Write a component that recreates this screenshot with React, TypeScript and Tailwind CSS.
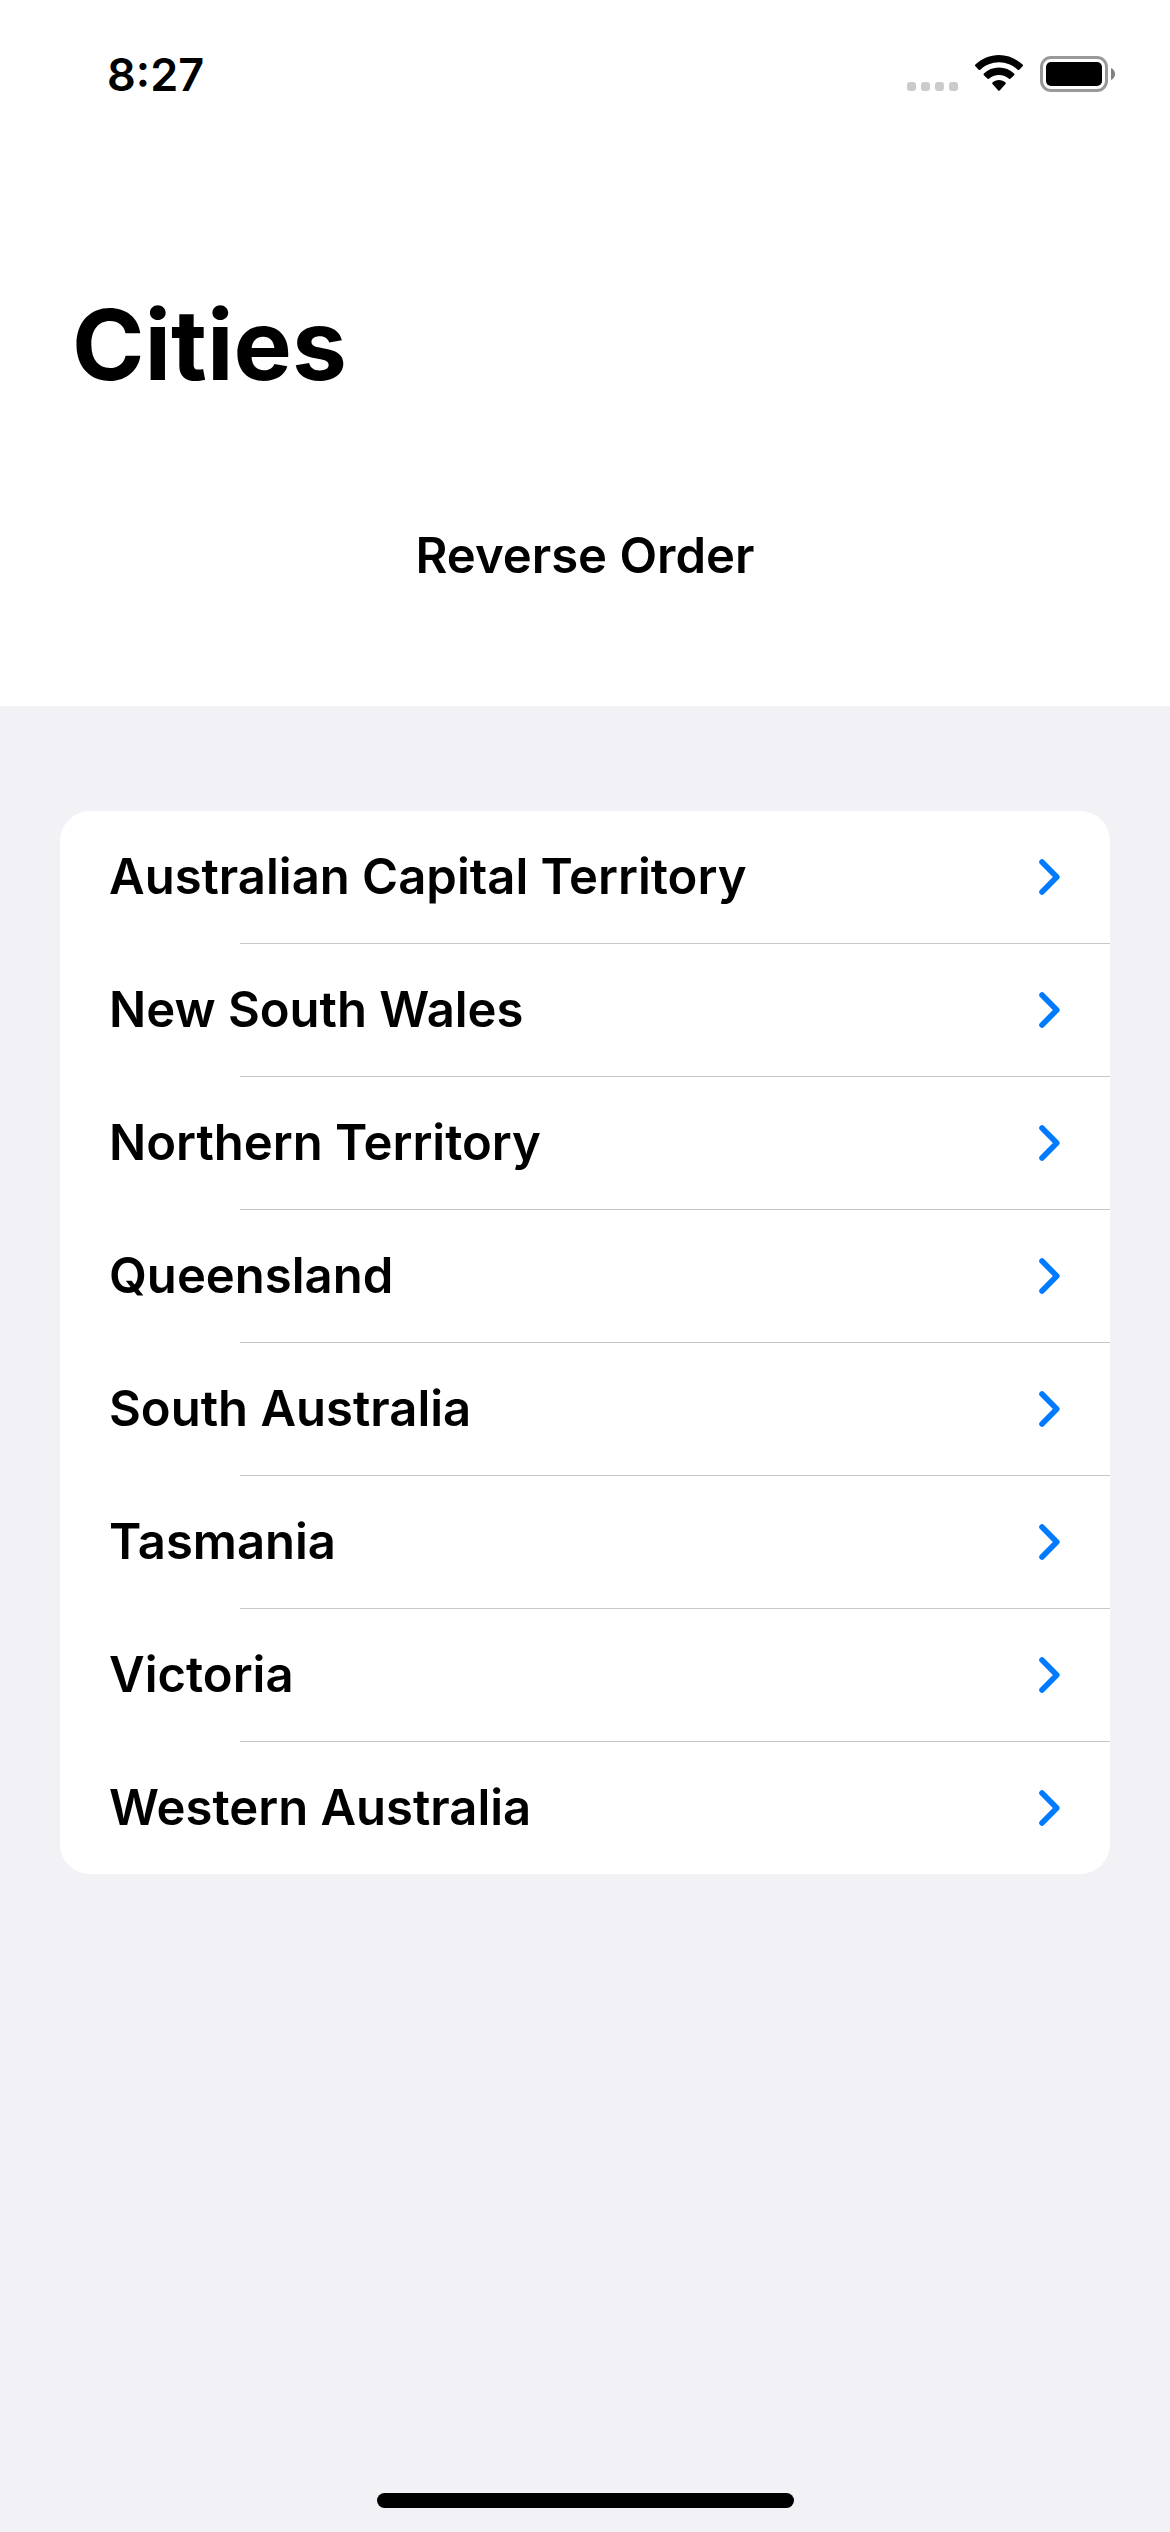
import { useState } from "react";

const STATES = [
  "Australian Capital Territory",
  "New South Wales",
  "Northern Territory",
  "Queensland",
  "South Australia",
  "Tasmania",
  "Victoria",
  "Western Australia",
];

function SignalDots() {
  return (
    <div className="flex gap-[5px] pt-[27px]" aria-hidden="true">
      <span className="size-[9px] rounded-[3px] bg-[#cbcbcb]" />
      <span className="size-[9px] rounded-[3px] bg-[#cbcbcb]" />
      <span className="size-[9px] rounded-[3px] bg-[#cbcbcb]" />
      <span className="size-[9px] rounded-[3px] bg-[#cbcbcb]" />
    </div>
  );
}

function WifiIcon() {
  return (
    <svg width="48" height="36" viewBox="0 0 48 36" aria-hidden="true">
      <path d="M24 0C33 0 41.300 3.600 47.600 9.600Q48.400 10.400 47.600 11.200L44.300 14.700Q43.500 15.500 42.700 14.700C37.700 10 31.200 7.200 24 7.200S10.300 10 5.300 14.700Q4.500 15.500 3.700 14.700L.4 11.200Q-.4 10.400 .4 9.600C6.700 3.600 15 0 24 0Z" />
      <path d="M24 12.600C29.900 12.600 35.100 14.900 39.100 18.600Q39.900 19.400 39.100 20.200L35.700 23.600Q34.900 24.400 34.100 23.700C31.400 21.300 27.900 19.900 24 19.900S16.600 21.300 13.900 23.700Q13.100 24.400 12.300 23.600L8.900 20.200Q8.100 19.400 8.900 18.600C12.900 14.900 18.100 12.600 24 12.600Z" />
      <path d="M24 25C26.500 25 28.800 26 30.500 27.500Q31.200 28.200 30.500 28.900L24.700 35.400Q24 36.100 23.300 35.400L17.500 28.900Q16.800 28.200 17.500 27.500C19.200 26 21.500 25 24 25Z" />
    </svg>
  );
}

function BatteryIcon() {
  return (
    <svg width="75" height="36" viewBox="0 0 75 36" aria-hidden="true">
      <rect x="1.500" y="1.500" width="65" height="33" rx="9.500" fill="none" stroke="#999" strokeWidth="3" />
      <rect x="6" y="6" width="56" height="24" rx="5" />
      <path d="M71 12C73.500 13 75 15.400 75 18S73.500 23 71 24Z" fill="#808080" />
    </svg>
  );
}

function Chevron() {
  return (
    <svg width="21" height="36" viewBox="0 0 21 36" fill="none" aria-hidden="true">
      <path d="M3 3L17.800 18L3 33" stroke="#007aff" strokeWidth="5.600" strokeLinecap="round" strokeLinejoin="round" />
    </svg>
  );
}

export default function App() {
  const [reversed, setReversed] = useState(false);
  const rows = reversed ? [...STATES].reverse() : STATES;

  return (
    <div className="flex min-h-screen flex-col bg-[#f2f1f6] font-['Inter',sans-serif] text-black">
      <header className="bg-white pb-[120px]">
        <div className="flex items-start justify-between pt-[55px] pr-[55px] pl-[107px]">
          <time className="text-[45px] leading-[40px] font-semibold">8:27</time>
          <div className="flex items-start">
            <SignalDots />
            <div className="pl-[17px]">
              <WifiIcon />
            </div>
            <div className="pt-px pl-[17px]">
              <BatteryIcon />
            </div>
          </div>
        </div>
        <h1 className="px-[72px] pt-[190px] text-[98px] leading-[120px] font-bold">Cities</h1>
        <div className="flex justify-center pt-[121px]">
          <button
            type="button"
            onClick={() => setReversed(!reversed)}
            className="text-[49px] leading-[60px] font-semibold"
          >
            Reverse Order
          </button>
        </div>
      </header>

      <main className="flex-1 px-[60px] pt-[105px]">
        <ul className="overflow-hidden rounded-[30px] bg-white">
          {rows.map((name, i) => (
            <li key={name}>
              <a href="#" className="flex h-[132px] items-center justify-between pr-[50px] pl-[49px]">
                <span className="text-[49px] leading-[60px] font-semibold">{name}</span>
                <Chevron />
              </a>
              {i < rows.length - 1 && <div className="ml-[180px] h-px bg-[#c6c6c8]" />}
            </li>
          ))}
        </ul>
      </main>

      <footer className="flex justify-center pb-6">
        <div className="h-[15px] w-[417px] rounded-full bg-black" />
      </footer>
    </div>
  );
}
